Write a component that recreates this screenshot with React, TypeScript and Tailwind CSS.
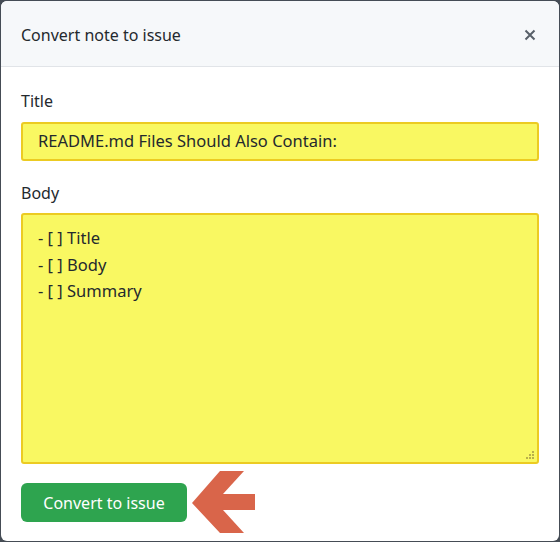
import React from 'react';

const font = { fontFamily: '"Segoe UI", "Noto Sans", "Open Sans", sans-serif' };

export default function App() {
  return (
    <div className="w-[560px] h-[542px] bg-[#454c55] p-px" style={font}>
      <div className="h-full bg-white rounded-md overflow-hidden flex flex-col">
        <div className="h-[66px] bg-[#f6f8fa] border-b border-[#e1e4e8] flex items-center justify-between pl-5 pr-[21px] pt-[3px] shrink-0">
          <h1 className="text-[16px] text-[#24292e]">Convert note to issue</h1>
          <svg width="16" height="16" viewBox="0 0 16 16" className="text-[#586069]">
            <path d="M3.5 3.5l9 9M12.5 3.5l-9 9" stroke="currentColor" strokeWidth="2" strokeLinecap="butt" />
          </svg>
        </div>
        <div className="px-5 pt-[22px]">
          <label className="block text-[16px] text-[#24292e] leading-6">Title</label>
          <div className="mt-[9px] h-[39px] bg-[#f9f862] border-2 border-[#eccb22] rounded-[3px] flex items-center pl-[15px] text-[16.5px] text-[#24292e]">
            README.md Files Should Also Contain:
          </div>
          <label className="block mt-[20px] text-[16px] text-[#24292e] leading-6">Body</label>
          <div className="relative mt-[8px] h-[251px] bg-[#f9f862] border-2 border-[#eccb22] rounded-[3px] pl-[15px] pt-[10px] text-[16.5px] text-[#24292e] leading-[26.5px]">
            <div>- [ ] Title</div>
            <div>- [ ] Body</div>
            <div>- [ ] Summary</div>
            <svg width="9" height="9" viewBox="0 0 9 9" className="absolute right-[2px] bottom-[2px]">
              <rect x="6" y="0" width="2" height="2" fill="#b9b04a" />
              <rect x="3" y="3" width="2" height="2" fill="#b9b04a" />
              <rect x="6" y="3" width="2" height="2" fill="#b9b04a" />
              <rect x="0" y="6" width="2" height="2" fill="#b9b04a" />
              <rect x="3" y="6" width="2" height="2" fill="#b9b04a" />
              <rect x="6" y="6" width="2" height="2" fill="#b9b04a" />
            </svg>
          </div>
          <div className="mt-[6px] flex items-start">
            <button className="mt-[13px] w-[166px] h-[39px] bg-[#2ea44f] rounded-md text-white text-[16px]">Convert to issue</button>
            <svg width="70" height="64" viewBox="190 469 70 64" className="ml-[3px]">
              <polygon points="192,502 220,470 244,470 223,493 255,493 255,509 223,509 244,532 220,532" fill="#d9654a" />
            </svg>
          </div>
        </div>
      </div>
    </div>
  );
}
